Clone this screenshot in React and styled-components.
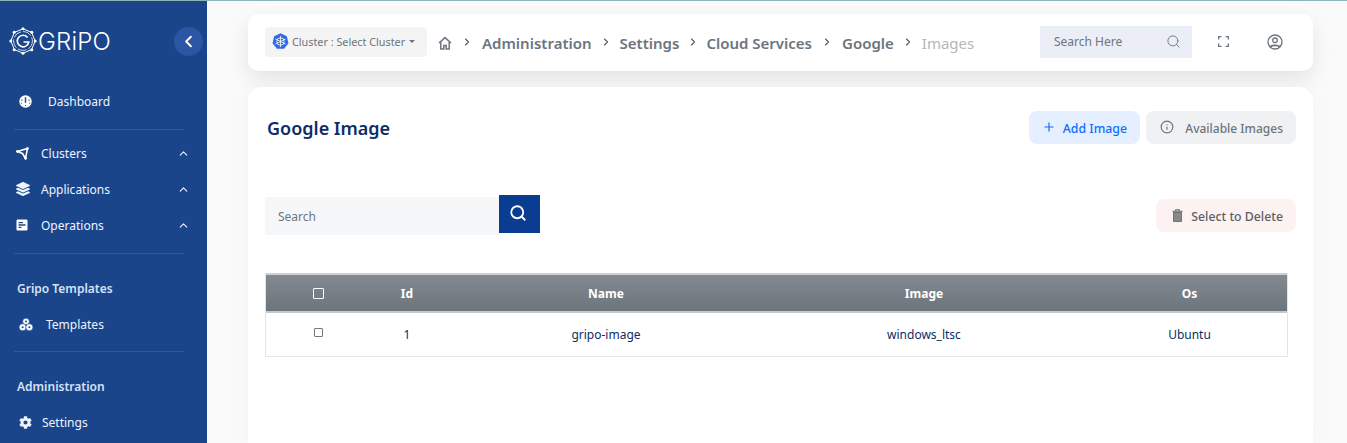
import styled, { createGlobalStyle } from "styled-components";
import { ChevronLeft, ChevronUp, ChevronRight, Search, Plus, Info } from "lucide-react";
import { FaLayerGroup, FaCog } from "react-icons/fa";

const GlobalStyle = createGlobalStyle`
  html, body {
    margin: 0;
    padding: 0;
    height: 443px;
    overflow: hidden;
    background: #fff;
    font-family: "Noto Sans", "Open Sans", sans-serif;
  }
  * { box-sizing: border-box; }
`;

const columns = "105px 72px 326px 310px 210px";

function LogoMark() {
  return (
    <svg width="28" height="28" viewBox="0 0 28 28" fill="none" stroke="#fff" strokeWidth="1">
      <polygon points="14,1.8 22.6,5.4 26.2,14 22.6,22.6 14,26.2 5.4,22.6 1.8,14 5.4,5.4" />
      <circle cx="14" cy="14" r="9.4" strokeWidth="0.8" strokeDasharray="9 2" />
      <path d="M18.6 10.4A5.8 5.8 0 1 0 19.8 15H14.5" strokeWidth="1.6" />
      <g fill="#fff" stroke="none">
        <circle cx="14" cy="1.8" r="1.5" />
        <circle cx="22.8" cy="5.2" r="1.5" />
        <circle cx="26.2" cy="14" r="1.5" />
        <circle cx="22.8" cy="22.8" r="1.5" />
        <circle cx="14" cy="26.2" r="1.5" />
        <circle cx="5.2" cy="22.8" r="1.5" />
        <circle cx="1.8" cy="14" r="1.5" />
        <circle cx="5.2" cy="5.2" r="1.5" />
      </g>
    </svg>
  );
}

function GaugeIcon() {
  return (
    <svg width="13" height="13" viewBox="0 0 13 13">
      <circle cx="6.5" cy="6.5" r="6.2" fill="#fff" />
      <path d="M6.5 2.2v5.6" stroke="#1a458b" strokeWidth="1.4" />
      <path d="M3 4.4v1.4M10 4.4v1.4M2.4 7.6v1M10.6 7.6v1M6.5 10v1" stroke="#1a458b" strokeWidth="1" />
    </svg>
  );
}

function ClusterIcon() {
  return (
    <svg width="13" height="13" viewBox="0 0 13 13" fill="none" stroke="#fff" strokeWidth="1.6">
      <path d="M1.5 4.5L11.5 1.5L9.5 11.5L6.5 6.5Z" />
      <circle cx="11.3" cy="1.7" r="1.4" fill="#fff" stroke="none" />
      <circle cx="1.6" cy="4.5" r="1.4" fill="#fff" stroke="none" />
      <circle cx="9.6" cy="11.2" r="1.4" fill="#fff" stroke="none" />
    </svg>
  );
}

function OperationsIcon() {
  return (
    <svg width="12" height="12" viewBox="0 0 12 12">
      <rect width="11" height="11" x="0.5" y="0.5" rx="1.2" fill="#fff" />
      <path d="M2.5 3.6h4.5M2.5 6h7M2.5 8.4h3" stroke="#1a458b" strokeWidth="1.3" />
    </svg>
  );
}

function TemplatesIcon() {
  return (
    <svg width="14" height="13" viewBox="0 0 14 13" fill="#fff" stroke="#1a458b" strokeWidth="0.6">
      <circle cx="7" cy="3.5" r="3.3" />
      <circle cx="3.6" cy="9.2" r="3.5" />
      <circle cx="10.4" cy="9.2" r="3.5" />
      <g fill="#1a458b" stroke="none">
        <circle cx="7" cy="3.5" r="1" />
        <circle cx="3.6" cy="9.2" r="1" />
        <circle cx="10.4" cy="9.2" r="1" />
      </g>
    </svg>
  );
}

function HomeIcon() {
  return (
    <svg width="14" height="14" viewBox="0 0 14 14" fill="none" stroke="#6c757d" strokeWidth="1.5">
      <path d="M1 7L7 1.6L13 7" />
      <path d="M2.8 6v7h3v-3.5h2.4V13h3V6" />
    </svg>
  );
}

function KubeIcon() {
  return (
    <svg width="17" height="17" viewBox="0 0 17 17">
      <polygon points="8.5,0.3 14.8,3.3 16.5,10.2 12.1,15.8 4.9,15.8 0.5,10.2 2.2,3.3" fill="#326ce5" />
      <g stroke="#fff" strokeWidth="0.8" fill="none">
        <circle cx="8.5" cy="8.5" r="3.7" />
        <path d="M8.5 3v11M3.5 6l10 5M13.5 6l-10 5" />
      </g>
    </svg>
  );
}

function FullscreenIcon() {
  return (
    <svg width="11" height="11" viewBox="0 0 11 11" fill="none" stroke="#6c757d" strokeWidth="1.3">
      <path d="M0.7 3.5V0.7H3.5M7.5 0.7h2.8v2.8M10.3 7.5v2.8H7.5M3.5 10.3H0.7V7.5" />
    </svg>
  );
}

function UserIcon() {
  return (
    <svg width="16" height="16" viewBox="0 0 16 16" fill="none" stroke="#6c757d" strokeWidth="1.3">
      <circle cx="8" cy="8" r="7" />
      <circle cx="8" cy="6.3" r="2.3" />
      <path d="M3.3 12.8C4.5 10.8 11.5 10.8 12.7 12.8" strokeWidth="1.8" />
    </svg>
  );
}

function TrashIcon() {
  return (
    <svg width="11" height="13" viewBox="0 0 11 13">
      <path d="M0.5 2.2h10M3.7 2V0.8h3.6V2" fill="none" stroke="#6c6c6c" strokeWidth="1.1" />
      <rect x="1.6" y="3.4" width="7.8" height="9" fill="#8a8a8a" stroke="#6c6c6c" strokeWidth="1" />
    </svg>
  );
}

const Page = styled.div`
  width: 1347px;
  height: 443px;
  border-top: 1px solid #8db6b9;
  display: flex;
  overflow: hidden;
`;

const Sidebar = styled.aside`
  width: 207px;
  flex: none;
  background: #1a458b;
  color: #fff;
  padding: 0 0 0 14px;
`;

const LogoRow = styled.div`
  height: 80px;
  margin-bottom: 2px;
  display: flex;
  align-items: center;
  gap: 1px;
  margin-left: -5px;
`;

const LogoText = styled.span`
  font-family: "Inter", sans-serif;
  font-weight: 300;
  font-size: 24px;
  letter-spacing: 0.2px;
  width: 135px;
  flex: none;
`;

const CollapseButton = styled.button`
  width: 29px;
  height: 29px;
  border: none;
  border-radius: 50%;
  padding: 0;
  background: #2a56a4;
  color: #fff;
  display: flex;
  align-items: center;
  justify-content: center;
`;

const NavItem = styled.div`
  height: 36px;
  margin-top: ${(p) => p.$top || 0}px;
  display: flex;
  align-items: center;
  padding-left: ${(p) => p.$pad || 2}px;
  font-size: 12px;
  color: #eef4ff;
  width: 176px;
`;

const NavIcon = styled.span`
  width: ${(p) => p.$width}px;
  flex: none;
  display: flex;
  align-items: center;
`;

const NavLabel = styled.span`
  flex: 1;
`;

const Divider = styled.div`
  width: 170px;
  height: 1px;
  background: #30589d;
  margin: ${(p) => p.$margin};
`;

const SectionTitle = styled.div`
  font-size: 12px;
  font-weight: 600;
  color: #d6e2f5;
  padding-left: 3px;
  height: 18px;
  line-height: 18px;
`;

const Main = styled.main`
  flex: 1;
  background: #fafafa;
  padding: 13px 34px 0 41px;
  display: flex;
  flex-direction: column;
  gap: 16px;
`;

const TopBar = styled.header`
  height: 57px;
  flex: none;
  background: #fff;
  border-radius: 10px;
  box-shadow: 0 8px 20px rgba(0, 0, 0, 0.09);
  display: flex;
  align-items: center;
  padding: 0 17px 0 17px;
`;

const ClusterChip = styled.div`
  width: 162px;
  height: 30px;
  background: #f4f4f5;
  border-radius: 4px;
  display: flex;
  align-items: center;
  gap: 3px;
  padding-left: 7px;
  font-size: 10.8px;
  color: #6c757d;
  margin-top: -2px;
`;

const Caret = styled.span`
  width: 0;
  height: 0;
  border-left: 3.5px solid transparent;
  border-right: 3.5px solid transparent;
  border-top: 3.5px solid #6c757d;
  margin-left: 1px;
`;

const Crumbs = styled.nav`
  display: flex;
  align-items: center;
  margin-left: 11px;
  flex: 1;
`;

const HomeSlot = styled.span`
  display: flex;
  margin-top: 1px;
`;

const Crumb = styled.span`
  font-size: 15px;
  font-weight: 600;
  color: ${(p) => (p.$muted ? "#b3b7bb" : "#6c757d")};
  ${(p) => p.$muted && "font-weight: 400;"}
`;

const CrumbSep = styled.span`
  width: ${(p) => p.$width || 28}px;
  display: flex;
  justify-content: center;
  color: #4f5860;
  margin-top: -1px;
`;

const TopSearch = styled.div`
  width: 152px;
  height: 32px;
  background: #ebeef6;
  display: flex;
  align-items: center;
  justify-content: space-between;
  padding: 0 11px 0 14px;
  font-size: 12px;
  color: #6c757d;
  margin-top: -2px;
`;

const TopIconSlot = styled.div`
  width: ${(p) => p.$width}px;
  display: flex;
  justify-content: center;
  margin-top: -2px;
`;

const Card = styled.section`
  flex: 1;
  background: #fff;
  border-radius: 14px 14px 0 0;
  box-shadow: 0 0 20px rgba(0, 0, 0, 0.03);
  padding: 23px 17px 0 17px;
`;

const TitleRow = styled.div`
  display: flex;
  justify-content: space-between;
  align-items: center;
  height: 34px;
`;

const Title = styled.h1`
  margin: 2px 0 0 2px;
  font-size: 18px;
  font-weight: 600;
  color: #0c2d66;
`;

const ButtonGroup = styled.div`
  display: flex;
  gap: 6px;
`;

const ActionButton = styled.button`
  height: 33px;
  width: ${(p) => p.$width}px;
  margin-top: ${(p) => p.$top || 0}px;
  border: none;
  border-radius: 8px;
  background: ${(p) => p.$bg};
  color: ${(p) => p.$color};
  font-family: inherit;
  font-size: ${(p) => p.$size}px;
  font-weight: 500;
  display: flex;
  align-items: center;
  justify-content: flex-end;
  gap: ${(p) => p.$gap}px;
  padding: 2px 13px 0 0;

  svg {
    margin-top: -2px;
  }
`;

const ToolRow = styled.div`
  display: flex;
  justify-content: space-between;
  align-items: center;
  margin-top: 51px;
  height: 39px;
`;

const SearchGroup = styled.div`
  display: flex;
  align-items: flex-start;
`;

const SearchField = styled.div`
  width: 234px;
  height: 38px;
  margin-top: 2px;
  padding-top: 1px;
  background: #f6f7f9;
  padding-left: 13px;
  display: flex;
  align-items: center;
  font-size: 12px;
  color: #6c757d;
`;

const SearchButton = styled.button`
  width: 41px;
  height: 38px;
  border: none;
  padding: 0 3px 2px 0;
  background: #0a3d91;
  color: #fff;
  display: flex;
  align-items: center;
  justify-content: center;
`;

const Table = styled.div`
  width: 1023px;
  margin-top: 39px;
  border: 1px solid #e4e5e7;
  border-top: none;
  font-size: 12px;
`;

const HeadRow = styled.div`
  display: grid;
  grid-template-columns: ${columns};
  height: 40px;
  border-top: 2px solid #cdcfd2;
  border-bottom: 2px solid #c6c9cc;
  background: linear-gradient(#838a91, #6c747c);
  color: #fff;
  font-weight: 700;
`;

const BodyRow = styled.div`
  display: grid;
  grid-template-columns: ${columns};
  height: 43px;
  color: #0c2d66;
`;

const Cell = styled.div`
  display: flex;
  align-items: center;
  justify-content: center;
  ${(p) => p.$os && "padding-left: 11px;"}
  ${(p) => p.$check && "padding-bottom: 4px;"}
`;

const CheckBox = styled.span`
  display: block;
  border-radius: 1px;
  width: ${(p) => p.$size}px;
  height: ${(p) => p.$size}px;
  background: #fff;
  border: 1px solid #767676;
  ${(p) => p.$head && "background: transparent; border: 1.5px solid #fff;"}
`;

export default function App() {
  return (
    <>
      <GlobalStyle />
      <Page>
        <Sidebar>
          <LogoRow>
            <LogoMark />
            <LogoText>GRiPO</LogoText>
            <CollapseButton><ChevronLeft size={19} strokeWidth={2.4} /></CollapseButton>
          </LogoRow>
          <NavItem $pad={5}>
            <NavIcon $width={29}><GaugeIcon /></NavIcon>
            <NavLabel>Dashboard</NavLabel>
          </NavItem>
          <Divider $margin="10px 0 5px" />
          <NavItem>
            <NavIcon $width={25}><ClusterIcon /></NavIcon>
            <NavLabel>Clusters</NavLabel>
            <ChevronUp size={13} />
          </NavItem>
          <NavItem>
            <NavIcon $width={25}><FaLayerGroup size={14} /></NavIcon>
            <NavLabel>Applications</NavLabel>
            <ChevronUp size={13} />
          </NavItem>
          <NavItem>
            <NavIcon $width={25}><OperationsIcon /></NavIcon>
            <NavLabel>Operations</NavLabel>
            <ChevronUp size={13} />
          </NavItem>
          <Divider $margin="10px 0 26px" />
          <SectionTitle>Gripo Templates</SectionTitle>
          <NavItem $pad={5} $top={8}>
            <NavIcon $width={27}><TemplatesIcon /></NavIcon>
            <NavLabel>Templates</NavLabel>
          </NavItem>
          <Divider $margin="9px 0 26px" />
          <SectionTitle>Administration</SectionTitle>
          <NavItem $pad={5} $top={8}>
            <NavIcon $width={23}><FaCog size={13} /></NavIcon>
            <NavLabel>Settings</NavLabel>
          </NavItem>
        </Sidebar>
        <Main>
          <TopBar>
            <ClusterChip>
              <KubeIcon />
              <span>Cluster : Select Cluster</span>
              <Caret />
            </ClusterChip>
            <Crumbs>
              <HomeSlot><HomeIcon /></HomeSlot>
              <CrumbSep $width={30}><ChevronRight size={12} strokeWidth={2.2} /></CrumbSep>
              <Crumb>Administration</Crumb>
              <CrumbSep><ChevronRight size={12} strokeWidth={2.2} /></CrumbSep>
              <Crumb>Settings</Crumb>
              <CrumbSep $width={27}><ChevronRight size={12} strokeWidth={2.2} /></CrumbSep>
              <Crumb>Cloud Services</Crumb>
              <CrumbSep $width={30}><ChevronRight size={12} strokeWidth={2.2} /></CrumbSep>
              <Crumb>Google</Crumb>
              <CrumbSep><ChevronRight size={12} strokeWidth={2.2} /></CrumbSep>
              <Crumb $muted>Images</Crumb>
            </Crumbs>
            <TopSearch>
              <span>Search Here</span>
              <Search size={15} strokeWidth={1.5} />
            </TopSearch>
            <TopIconSlot $width={62}><FullscreenIcon /></TopIconSlot>
            <TopIconSlot $width={42}><UserIcon /></TopIconSlot>
          </TopBar>
          <Card>
            <TitleRow>
              <Title>Google Image</Title>
              <ButtonGroup>
                <ActionButton $width={111} $size={12.3} $bg="#e5efff" $color="#0d6efd" $gap={7}>
                  <Plus size={14} />
                  Add Image
                </ActionButton>
                <ActionButton $width={150} $size={12} $bg="#f0f1f3" $color="#6c757d" $gap={11}>
                  <Info size={14} />
                  Available Images
                </ActionButton>
              </ButtonGroup>
            </TitleRow>
            <ToolRow>
              <SearchGroup>
                <SearchField>Search</SearchField>
                <SearchButton><Search size={18} strokeWidth={2.4} /></SearchButton>
              </SearchGroup>
              <ActionButton $width={140} $size={12.3} $bg="#fdf2f2" $color="#5e5e5e" $gap={8} $top={2}>
                <TrashIcon />
                Select to Delete
              </ActionButton>
            </ToolRow>
            <Table>
              <HeadRow>
                <Cell><CheckBox $size={11} $head /></Cell>
                <Cell>Id</Cell>
                <Cell>Name</Cell>
                <Cell>Image</Cell>
                <Cell $os>Os</Cell>
              </HeadRow>
              <BodyRow>
                <Cell $check><CheckBox $size={9} /></Cell>
                <Cell>1</Cell>
                <Cell>gripo-image</Cell>
                <Cell>windows_ltsc</Cell>
                <Cell $os>Ubuntu</Cell>
              </BodyRow>
            </Table>
          </Card>
        </Main>
      </Page>
    </>
  );
}
